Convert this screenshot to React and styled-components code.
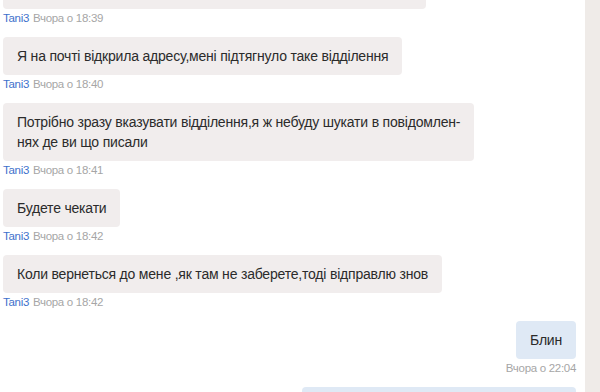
import React from "react";
import styled, { createGlobalStyle } from "styled-components";

const Global = createGlobalStyle`
  html, body { margin: 0; padding: 0; background: #ffffff; }
  body { font-family: "Liberation Sans", Arial, sans-serif; overflow: hidden; }
`;

const Page = styled.div`
  display: flex;
  width: 600px;
  height: 392px;
  overflow: hidden;
`;

const Chat = styled.div`
  flex: 1;
  display: flex;
  flex-direction: column;
  padding: 0 9px 0 3px;
  margin-top: -29px;
`;

const Sidebar = styled.div`
  width: 15px;
  flex: none;
  background: #efebe8;
`;

const Message = styled.div`
  display: flex;
  flex-direction: column;
  align-items: ${(p) => (p.$out ? "flex-end" : "flex-start")};
  margin-bottom: 12px;
`;

const Bubble = styled.div`
  box-sizing: border-box;
  background: ${(p) => (p.$out ? "#dfe9f5" : "#f1eded")};
  color: #2b2b2b;
  font-size: 14px;
  letter-spacing: -0.2px;
  line-height: 20px;
  padding: 9px 14px;
  border-radius: 4px;
  min-height: 38px;
  width: ${(p) => p.$width || "auto"};
`;

const Meta = styled.div`
  margin-top: 2px;
  font-size: 11.5px;
  letter-spacing: -0.3px;
  line-height: 14px;
  color: #a6a6a6;
  white-space: nowrap;
`;

const Name = styled.span`
  color: #3f72cc;
  margin-right: 4px;
`;

const incoming = [
  { text: "", time: "Вчора о 18:39", width: "423px" },
  { text: "Я на почті відкрила адресу,мені підтягнуло таке відділення", time: "Вчора о 18:40" },
  {
    text: ["Потрібно зразу вказувати відділення,я ж небуду шукати в повідомлен-", "нях де ви що писали"],
    time: "Вчора о 18:41",
  },
  { text: "Будете чекати", time: "Вчора о 18:42" },
  { text: "Коли вернеться до мене ,як там не заберете,тоді відправлю знов", time: "Вчора о 18:42" },
];

export default function App() {
  return (
    <>
      <Global />
      <Page>
        <Chat>
          {incoming.map((m, i) => (
            <Message key={i}>
              <Bubble $width={m.width}>
                {Array.isArray(m.text)
                  ? m.text.map((t, j) => (
                      <React.Fragment key={j}>
                        {j > 0 && <br />}
                        {t}
                      </React.Fragment>
                    ))
                  : m.text}
              </Bubble>
              <Meta>
                <Name>Tani3</Name>
                {m.time}
              </Meta>
            </Message>
          ))}
          <Message $out>
            <Bubble $out>Блин</Bubble>
            <Meta>Вчора о 22:04</Meta>
          </Message>
          <Message $out>
            <Bubble $out $width="274px">&nbsp;</Bubble>
          </Message>
        </Chat>
        <Sidebar />
      </Page>
    </>
  );
}
